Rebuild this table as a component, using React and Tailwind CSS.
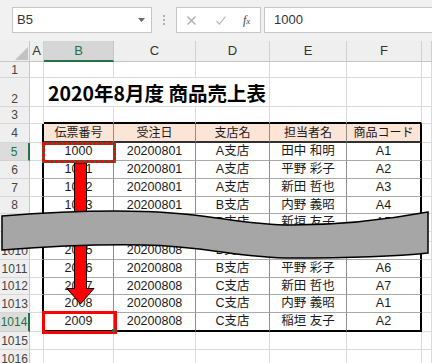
import React from "react";

const COLW = ["w-[14px]", "w-[70px]", "w-[82px]", "w-[74px]", "w-[77px]", "w-[75px]", "flex-1"];
const COLN = ["A", "B", "C", "D", "E", "F", ""];

const HEAD = ["伝票番号", "受注日", "支店名", "担当者名", "商品コード"];

const ROWS = [
  { n: "1", h: "h-[16px]", kind: "plain" },
  { n: "2", h: "h-[29px]", kind: "title" },
  { n: "3", h: "h-[17px]", kind: "top" },
  { n: "4", h: "h-[19px]", kind: "head" },
  { n: "5", h: "h-[18px]", kind: "body", sel: true, d: ["1000", "20200801", "A支店", "田中 和明", "A1"] },
  { n: "6", h: "h-[18px]", kind: "body", d: ["1001", "20200801", "A支店", "平野 彩子", "A2"] },
  { n: "7", h: "h-[18px]", kind: "body", d: ["1002", "20200801", "A支店", "新田 哲也", "A3"] },
  { n: "8", h: "h-[17px]", kind: "body", d: ["1003", "20200801", "B支店", "内野 義昭", "A4"] },
  { n: "9", h: "h-[18px]", kind: "body", d: ["1004", "20200801", "B支店", "新垣 友子", "A5"] },
  { n: "", h: "h-[10px]", kind: "gap" },
  { n: "1010", h: "h-[18px]", kind: "body", d: ["2005", "20200808", "B支店", "稲垣 友子", "A5"] },
  { n: "1011", h: "h-[18px]", kind: "body", d: ["2006", "20200808", "B支店", "平野 彩子", "A6"] },
  { n: "1012", h: "h-[17px]", kind: "body", d: ["2007", "20200808", "C支店", "新田 哲也", "A7"] },
  { n: "1013", h: "h-[18px]", kind: "body", d: ["2008", "20200808", "C支店", "内野 義昭", "A1"] },
  { n: "1014", h: "h-[19px]", kind: "last", sel: true, d: ["2009", "20200808", "C支店", "稲垣 友子", "A2"] },
  { n: "1015", h: "h-[18px]", kind: "plain" },
  { n: "1016", h: "h-[18px]", kind: "plain" },
];

function rightBorder(kind, c) {
  const table = kind === "head" || kind === "body" || kind === "last" || kind === "gap";
  if (table) {
    if (c === 0 || c === 5) return " border-r-2 border-r-black";
    if (c === 6) return " border-r border-r-[#dadada]";
    return " border-r border-r-[#8e8e8e]";
  }
  if (kind === "title" && (c === 1 || c === 2)) return "";
  return " border-r border-r-[#dadada]";
}

function bottomBorder(kind, c) {
  const inT = c >= 1 && c <= 5;
  if (!inT) return " border-b border-b-[#dadada]";
  if (kind === "top") return " border-b-2 border-b-black";
  if (kind === "head") return " border-b-2 border-b-[#303030]";
  if (kind === "last") return " border-b-2 border-b-black";
  if (kind === "body" || kind === "gap") return " border-b border-b-[#a9a9a9]";
  return " border-b border-b-[#dadada]";
}

function Row({ r }) {
  const rowHead = r.sel
    ? "w-[30px] shrink-0 bg-[#dcdcdc] text-[#217346] border-r-2 border-r-[#217346] border-b border-b-[#d0d0d0]"
    : "w-[30px] shrink-0 bg-[#efefef] text-[#444] border-r border-r-[#c6c6c6] border-b border-b-[#d6d6d6]";
  const align = r.kind === "title" ? " items-end pb-[1px]" : " items-center";
  return (
    <div className={"flex " + r.h}>
      <div className={rowHead + " flex justify-center text-[12px] leading-none" + align}>{r.n}</div>
      {COLW.map((w, c) => {
        let content = null;
        let extra = " justify-center items-center";
        if (r.kind === "title" && c === 1) {
          extra = " items-end justify-start overflow-visible";
          content = (
            <span className="pl-[4px] pb-[1px] font-bold text-[19.5px] leading-[24px] whitespace-nowrap text-black [font-family:'Noto_Sans_CJK_JP',sans-serif]">
              2020年8月度 商品売上表
            </span>
          );
        }
        if (r.kind === "head" && c >= 1 && c <= 5) {
          extra = " justify-center items-center bg-[#fce4d6]";
          content = <span className="text-[12px] leading-none text-[#1a1a1a]">{HEAD[c - 1]}</span>;
        }
        if (r.d && c >= 1 && c <= 5) {
          content = <span className="text-[12.5px] leading-none text-[#1a1a1a] whitespace-nowrap">{r.d[c - 1]}</span>;
        }
        return (
          <div key={c} className={"flex shrink-0 " + w + extra + rightBorder(r.kind, c) + bottomBorder(r.kind, c)}>
            {content}
          </div>
        );
      })}
    </div>
  );
}

function Toolbar() {
  return (
    <div className="h-[41px] bg-[#f1f1f1] flex items-start pt-[7px] text-[13px] text-[#333]">
      <div className="ml-[12px] w-[140px] h-[26px] bg-white border border-[#c6c6c6] flex items-center justify-between pl-[4px] pr-[6px]">
        <span>B5</span>
        <svg width="7" height="4" viewBox="0 0 7 4"><path d="M0 0 L7 0 L3.5 4 Z" fill="#666" /></svg>
      </div>
      <div className="w-[24px] h-[26px] flex flex-col items-center justify-center gap-[2px]">
        <span className="w-[2px] h-[2px] bg-[#b0b0b0]" />
        <span className="w-[2px] h-[2px] bg-[#b0b0b0]" />
        <span className="w-[2px] h-[2px] bg-[#b0b0b0]" />
      </div>
      <div className="w-[85px] h-[26px] bg-white border border-[#c6c6c6] flex items-center">
        <svg className="ml-[10px]" width="9" height="9" viewBox="0 0 9 9">
          <path d="M0.5 0.5 L8.5 8.5 M8.5 0.5 L0.5 8.5" stroke="#a8a8a8" strokeWidth="1.2" />
        </svg>
        <svg className="ml-[20px]" width="10" height="9" viewBox="0 0 10 9">
          <path d="M0.5 5 L3.5 8 L9.5 0.5" stroke="#b8b8b8" strokeWidth="1.2" fill="none" />
        </svg>
        <span className="ml-[17px] italic text-[12px] text-[#444] [font-family:'Liberation_Serif',serif]">f<span className="text-[9px]">x</span></span>
      </div>
      <div className="ml-[3px] flex-1 h-[26px] bg-white border border-[#c6c6c6] border-r-0 flex items-center pl-[9px]">
        1000
      </div>
    </div>
  );
}

function ColHeader() {
  return (
    <div className="flex h-[21px]">
      <div className="w-[30px] shrink-0 bg-[#efefef] border-r border-r-[#c6c6c6] border-b border-b-[#c6c6c6] relative">
        <svg className="absolute left-0 top-0" width="30" height="21" viewBox="0 0 30 21">
          <path d="M15 19 L28 19 L28 6 Z" fill="#c2c2c2" />
        </svg>
      </div>
      {COLW.map((w, c) =>
        c === 1 ? (
          <div key={c} className={"flex shrink-0 items-center justify-center bg-[#d6d6d6] text-[#217346] border-r border-r-[#c6c6c6] border-b-2 border-b-[#217346] text-[13px] " + w}>
            {COLN[c]}
          </div>
        ) : (
          <div key={c} className={"flex shrink-0 items-center justify-center bg-[#efefef] text-[#333] border-r border-r-[#d0d0d0] border-b border-b-[#c6c6c6] text-[13px] " + w}>
            {COLN[c]}
          </div>
        )
      )}
    </div>
  );
}

export default function App() {
  return (
    <div className="relative w-[432px] h-[363px] overflow-hidden bg-white [font-family:'Liberation_Sans','Noto_Sans_CJK_JP',sans-serif]">
      <Toolbar />
      <ColHeader />
      <div className="bg-white">
        {ROWS.map((r, i) => (
          <Row key={i} r={r} />
        ))}
      </div>

      <svg className="absolute left-0 top-0 pointer-events-none" width="432" height="363" viewBox="0 0 432 363">
        <rect x="74.5" y="163" width="12" height="126" fill="#ff0000" stroke="#000" strokeWidth="1" />
        <path d="M67 288.5 L94 288.5 L80.5 304 Z" fill="#ff0000" stroke="#000" strokeWidth="1" strokeLinejoin="miter" />
        <rect x="75" y="286" width="11" height="4" fill="#ff0000" />
        <path
          d="M2,216 C40,213 90,210 144,211.5 C210,213 240,225 292,225 C345,225 390,219 428,212 L428,253 C390,257 345,258 292,258 C240,258 205,246 144,245 C90,244 40,247 2,250 Z"
          fill="#a6a6a6"
          stroke="#000"
          strokeWidth="1.5"
        />
        <rect x="43.5" y="143.5" width="71" height="18" fill="none" stroke="#217346" strokeWidth="3" />
        <rect x="43.5" y="143.5" width="71" height="18" fill="none" stroke="#ff0000" strokeWidth="3" strokeDasharray="3 2" />
      </svg>

      <div className="absolute left-[42px] top-[311px] w-[75px] h-[23px] border-[3px] border-[#ff0000]" />
      <div className="absolute left-[112px] top-[329px] w-[3px] h-[3px] bg-[#217346]" />
    </div>
  );
}
